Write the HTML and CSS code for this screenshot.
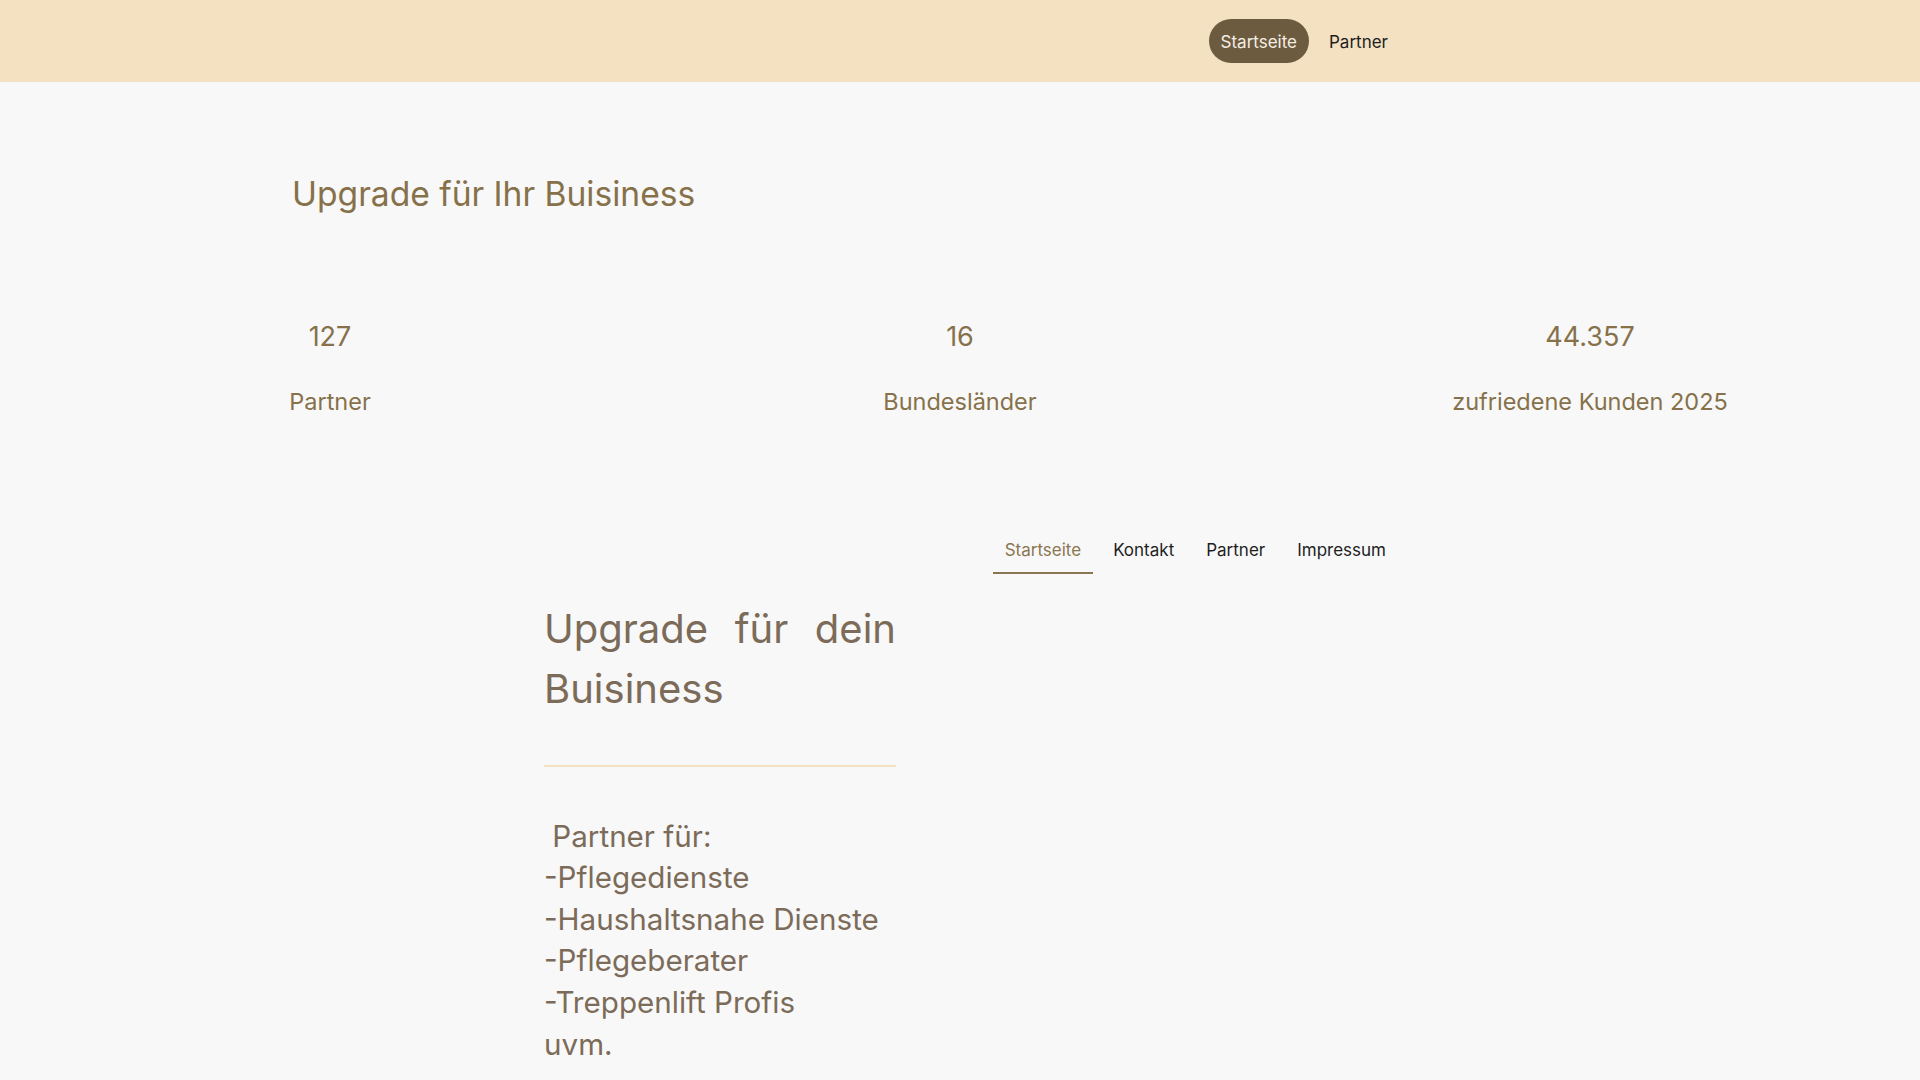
FILE: index.html
```html
<!DOCTYPE html>
<html lang="de">
<head>
<meta charset="utf-8">
<title>Upgrade für Ihr Buisiness</title>
<link rel="stylesheet" href="styles.css">
</head>
<body>
<header class="topbar">
  <nav class="topnav">
    <a class="pill" href="#">Startseite</a>
    <a class="toplink" href="#">Partner</a>
  </nav>
</header>
<main>
  <section class="intro">
    <h1 class="intro-title">Upgrade für Ihr Buisiness</h1>
    <div class="stats">
      <div class="stat">
        <div class="stat-num">127</div>
        <div class="stat-label">Partner</div>
      </div>
      <div class="stat">
        <div class="stat-num">16</div>
        <div class="stat-label">Bundesländer</div>
      </div>
      <div class="stat">
        <div class="stat-num">44.357</div>
        <div class="stat-label">zufriedene Kunden 2025</div>
      </div>
    </div>
  </section>
  <nav class="subnav">
    <a class="sublink active" href="#">Startseite</a>
    <a class="sublink" href="#">Kontakt</a>
    <a class="sublink" href="#">Partner</a>
    <a class="sublink" href="#">Impressum</a>
  </nav>
  <section class="content">
    <div class="content-col">
      <h2 class="content-title">Upgrade für dein Buisiness</h2>
      <hr class="rule">
      <p class="partner-list">&nbsp;Partner für:<br>-Pflegedienste<br>-Haushaltsnahe Dienste<br>-Pflegeberater<br>-Treppenlift Profis<br>uvm.</p>
    </div>
  </section>
</main>
</body>
</html>
```
FILE: styles.css
```css
* { box-sizing: border-box; }
body {
  margin: 0;
  background: #f8f8f8;
  font-family: Inter, "Noto Sans", sans-serif;
  font-weight: 400;
}
a { text-decoration: none; }

.topbar {
  height: 82px;
  background: #f4e1c1;
}
.topnav {
  max-width: 1400px;
  height: 100%;
  display: flex;
  justify-content: flex-end;
  align-items: center;
  gap: 8px;
}
.pill {
  display: inline-flex;
  align-items: center;
  height: 44px;
  padding: 2px 12px 0;
  border-radius: 22px;
  background: #6d5b3f;
  color: #f4eee4;
  font-size: 17px;
}
.toplink {
  padding: 2px 12px 0;
  color: #1e1e1e;
  font-size: 17px;
}

.intro { padding-top: 93px; }
.intro-title {
  margin: 0;
  padding-left: 292px;
  font-size: 33.6px;
  line-height: 38.4px;
  font-weight: 400;
  color: #86714a;
}
.stats {
  margin-top: 108px;
  padding: 0 15px;
  display: grid;
  grid-template-columns: repeat(3, 1fr);
  color: #86714a;
  text-align: center;
}
.stat-num {
  font-size: 27px;
  line-height: 32.4px;
}
.stat-label {
  margin-top: 34px;
  font-size: 23.5px;
  line-height: 28.8px;
}

.subnav {
  margin-top: 115px;
  max-width: 1398px;
  display: flex;
  justify-content: flex-end;
  gap: 8px;
}
.sublink {
  padding: 8px 12px 12px;
  font-size: 17px;
  line-height: 20px;
  color: #1e1e1e;
  border-bottom: 2px solid transparent;
}
.sublink.active {
  color: #8a7650;
  border-bottom-color: #8a7650;
}

.content { margin-top: 25px; }
.content-col {
  width: 352px;
  margin-left: 544px;
  color: #7b6b58;
}
.content-title {
  margin: 0;
  font-size: 40px;
  line-height: 60px;
  font-weight: 400;
  text-align: justify;
}
.rule {
  margin: 46px 0 0;
  border: 0;
  height: 2px;
  background: #f4e1c1;
}
.partner-list {
  margin: 49px 0 0;
  font-size: 29.6px;
  line-height: 41.6px;
}
```
